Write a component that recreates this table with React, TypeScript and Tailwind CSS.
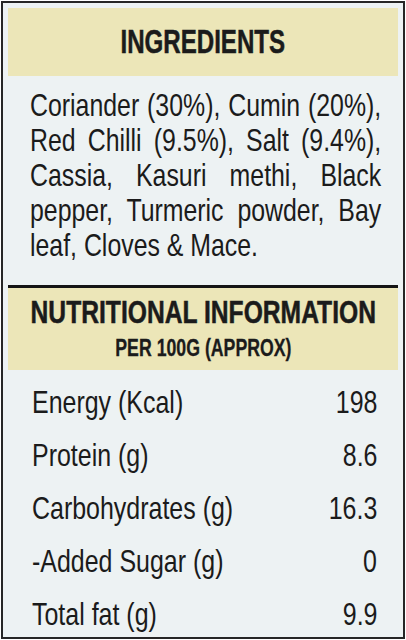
import React from "react";

const rows: [string, string][] = [
  ["Energy (Kcal)", "198"],
  ["Protein (g)", "8.6"],
  ["Carbohydrates (g)", "16.3"],
  ["-Added Sugar (g)", "0"],
  ["Total fat (g)", "9.9"],
];

export default function App() {
  return (
    <div className="w-[406px] h-[640px] bg-white p-px">
      <div className="h-full overflow-hidden border-2 border-[#262626] bg-[#edf2f3] px-[5px] pt-[5px] text-[#1b1b1b] font-['Liberation_Sans',Arial,sans-serif]">
        <div className="h-[68px] bg-[#ece6b8] flex items-center justify-center">
          <h2 className="inline-block text-[33px] leading-[32px] font-bold scale-x-[0.73] [-webkit-text-stroke:0.5px_#1b1b1b]">INGREDIENTS</h2>
        </div>
        <p className="ml-[22px] mt-[12px] w-[452px] origin-left scale-x-[0.777] text-[32px] leading-[35px] text-justify">
          Coriander (30%), Cumin (20%), Red Chilli (9.5%), Salt (9.4%), Cassia, Kasuri methi, Black pepper, Turmeric powder, Bay leaf, Cloves &amp; Mace.
        </p>
        <div className="mt-[22px] border-t-[3px] border-[#141414] bg-[#ece6b8] pt-[10px] pb-[9px] flex flex-col items-center">
          <h2 className="inline-block whitespace-nowrap text-[31px] leading-[30px] font-bold scale-x-[0.795] [-webkit-text-stroke:0.5px_#1b1b1b]">NUTRITIONAL INFORMATION</h2>
          <div className="inline-block whitespace-nowrap mt-[7px] text-[23px] leading-[26px] font-bold scale-x-[0.77] [-webkit-text-stroke:0.3px_#1b1b1b]">PER 100G (APPROX)</div>
        </div>
        <div className="pt-[6px] pl-[24px] pr-[21px]">
          {rows.map(([k, v]) => (
            <div key={k} className="flex justify-between text-[32px] leading-[53px] whitespace-nowrap">
              <span className="inline-block origin-left scale-x-[0.78]">{k}</span>
              <span className="inline-block origin-right scale-x-[0.78]">{v}</span>
            </div>
          ))}
        </div>
      </div>
    </div>
  );
}
